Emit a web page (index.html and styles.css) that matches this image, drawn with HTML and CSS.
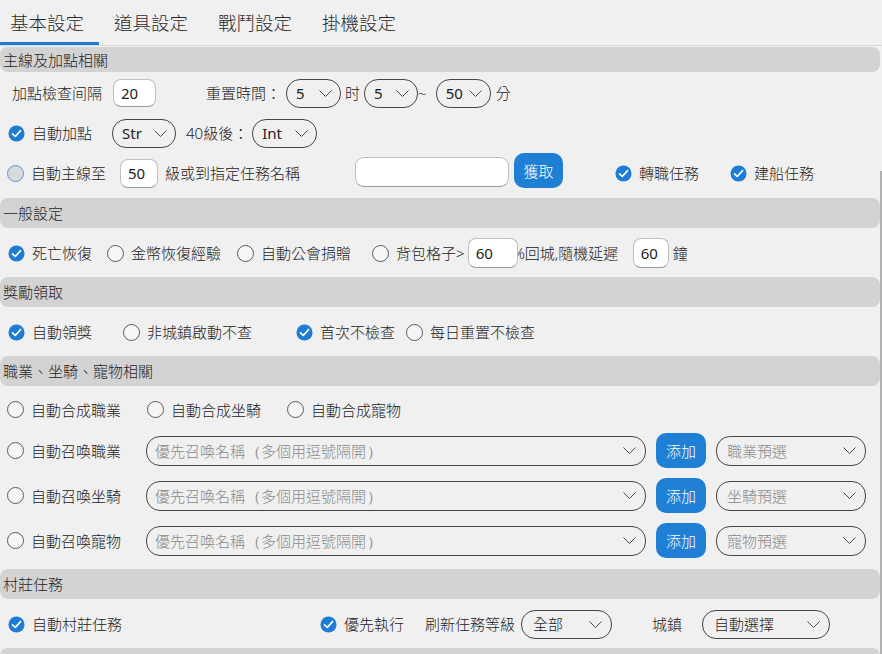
FILE: index.html
```html
<!DOCTYPE html>
<html lang="zh-Hant">
<head>
<meta charset="utf-8">
<title>基本設定</title>
<link rel="stylesheet" href="styles.css">
</head>
<body>
<nav class="tabs">
  <div class="tab active">基本設定</div>
  <div class="tab">道具設定</div>
  <div class="tab">戰鬥設定</div>
  <div class="tab">掛機設定</div>
</nav>

<main class="content">
  <section class="sec">
    <div class="head head-first">主線及加點相關</div>
    <div class="body body-first">
      <div class="row pl12">
        <span class="lbl">加點檢查间隔</span>
        <input class="inp h28 w43 ml11" value="20">
        <span class="lbl ml50">重置時間：</span>
        <div class="sel h28 w55 ml5"><span class="val">5</span><svg class="chev" viewBox="0 0 13 7"><path d="M0.5 0.5 6.5 6.5 12.5 0.5"/></svg></div>
        <span class="lbl ml4">时</span>
        <div class="sel h28 w54 ml4"><span class="val">5</span><svg class="chev" viewBox="0 0 13 7"><path d="M0.5 0.5 6.5 6.5 12.5 0.5"/></svg></div>
        <span class="lbl">~</span>
        <div class="sel h28 w55 ml9"><span class="val">50</span><svg class="chev" viewBox="0 0 13 7"><path d="M0.5 0.5 6.5 6.5 12.5 0.5"/></svg></div>
        <span class="lbl ml5">分</span>
      </div>
      <div class="row pl8">
        <label class="opt"><svg class="ico" viewBox="0 0 18 18"><circle cx="9" cy="9" r="8.5"/><path d="M4.8 9.3l2.9 2.9 5.6-6.2"/></svg><span>自動加點</span></label>
        <div class="sel w64 ml20"><span class="val">Str</span><svg class="chev" viewBox="0 0 13 7"><path d="M0.5 0.5 6.5 6.5 12.5 0.5"/></svg></div>
        <span class="lbl ml10">40級後：</span>
        <div class="sel w65 ml4"><span class="val">Int</span><svg class="chev" viewBox="0 0 13 7"><path d="M0.5 0.5 6.5 6.5 12.5 0.5"/></svg></div>
      </div>
      <div class="row pl7">
        <label class="opt"><span class="radio hover"></span><span>自動主線至</span></label>
        <input class="inp w38 ml14" value="50">
        <span class="lbl ml7">級或到指定任務名稱</span>
        <input class="inp inp-text w154 ml55 up2" value="">
        <button class="btn w49 ml5 up6">獲取</button>
        <label class="opt ml52"><svg class="ico" viewBox="0 0 18 18"><circle cx="9" cy="9" r="8.5"/><path d="M4.8 9.3l2.9 2.9 5.6-6.2"/></svg><span>轉職任務</span></label>
        <label class="opt ml31"><svg class="ico" viewBox="0 0 18 18"><circle cx="9" cy="9" r="8.5"/><path d="M4.8 9.3l2.9 2.9 5.6-6.2"/></svg><span>建船任務</span></label>
      </div>
    </div>
  </section>

  <section class="sec">
    <div class="head">一般設定</div>
    <div class="body">
      <div class="row pl8">
        <label class="opt"><svg class="ico" viewBox="0 0 18 18"><circle cx="9" cy="9" r="8.5"/><path d="M4.8 9.3l2.9 2.9 5.6-6.2"/></svg><span>死亡恢復</span></label>
        <label class="opt ml15"><span class="radio"></span><span>金幣恢復經驗</span></label>
        <label class="opt ml16"><span class="radio"></span><span>自動公會捐贈</span></label>
        <label class="opt ml21"><span class="radio"></span><span>背包格子&gt;</span></label>
        <input class="inp h30 w50 ml3 front" value="60">
        <span class="lbl lbl-pct">%回城,隨機延遲</span>
        <input class="inp h30 w36" value="60">
        <span class="lbl ml4">鐘</span>
      </div>
    </div>
  </section>

  <section class="sec">
    <div class="head">獎勵領取</div>
    <div class="body">
      <div class="row pl8">
        <label class="opt"><svg class="ico" viewBox="0 0 18 18"><circle cx="9" cy="9" r="8.5"/><path d="M4.8 9.3l2.9 2.9 5.6-6.2"/></svg><span>自動領獎</span></label>
        <label class="opt ml31"><span class="radio"></span><span>非城鎮啟動不查</span></label>
        <label class="opt ml44"><svg class="ico" viewBox="0 0 18 18"><circle cx="9" cy="9" r="8.5"/><path d="M4.8 9.3l2.9 2.9 5.6-6.2"/></svg><span>首次不檢查</span></label>
        <label class="opt ml11"><span class="radio"></span><span>每日重置不檢查</span></label>
      </div>
    </div>
  </section>

  <section class="sec">
    <div class="head">職業、坐騎、寵物相關</div>
    <div class="body body-pets">
      <div class="row row-short pl7">
        <label class="opt"><span class="radio"></span><span>自動合成職業</span></label>
        <label class="opt ml26"><span class="radio"></span><span>自動合成坐騎</span></label>
        <label class="opt ml26"><span class="radio"></span><span>自動合成寵物</span></label>
      </div>
      <div class="row row-tall pl7">
        <label class="opt"><span class="radio"></span><span>自動召喚職業</span></label>
        <div class="sel combo w500 ml25"><span class="ph">優先召喚名稱<span class="paren">（</span>多個用逗號隔開<span class="paren">）</span></span><svg class="chev" viewBox="0 0 13 7"><path d="M0.5 0.5 6.5 6.5 12.5 0.5"/></svg></div>
        <button class="btn w50 ml10">添加</button>
        <div class="sel preset w150 ml10"><span class="ph">職業預選</span><svg class="chev" viewBox="0 0 13 7"><path d="M0.5 0.5 6.5 6.5 12.5 0.5"/></svg></div>
      </div>
      <div class="row row-tall pl7">
        <label class="opt"><span class="radio"></span><span>自動召喚坐騎</span></label>
        <div class="sel combo w500 ml25"><span class="ph">優先召喚名稱<span class="paren">（</span>多個用逗號隔開<span class="paren">）</span></span><svg class="chev" viewBox="0 0 13 7"><path d="M0.5 0.5 6.5 6.5 12.5 0.5"/></svg></div>
        <button class="btn w50 ml10">添加</button>
        <div class="sel preset w150 ml10"><span class="ph">坐騎預選</span><svg class="chev" viewBox="0 0 13 7"><path d="M0.5 0.5 6.5 6.5 12.5 0.5"/></svg></div>
      </div>
      <div class="row row-tall pl7">
        <label class="opt"><span class="radio"></span><span>自動召喚寵物</span></label>
        <div class="sel combo w500 ml25"><span class="ph">優先召喚名稱<span class="paren">（</span>多個用逗號隔開<span class="paren">）</span></span><svg class="chev" viewBox="0 0 13 7"><path d="M0.5 0.5 6.5 6.5 12.5 0.5"/></svg></div>
        <button class="btn w50 ml10">添加</button>
        <div class="sel preset w150 ml10"><span class="ph">寵物預選</span><svg class="chev" viewBox="0 0 13 7"><path d="M0.5 0.5 6.5 6.5 12.5 0.5"/></svg></div>
      </div>
    </div>
  </section>

  <section class="sec">
    <div class="head">村莊任務</div>
    <div class="body">
      <div class="row pl8">
        <label class="opt"><svg class="ico" viewBox="0 0 18 18"><circle cx="9" cy="9" r="8.5"/><path d="M4.8 9.3l2.9 2.9 5.6-6.2"/></svg><span>自動村莊任務</span></label>
        <label class="opt ml198"><svg class="ico" viewBox="0 0 18 18"><circle cx="9" cy="9" r="8.5"/><path d="M4.8 9.3l2.9 2.9 5.6-6.2"/></svg><span>優先執行</span></label>
        <span class="lbl ml21">刷新任務等級</span>
        <div class="sel w91 ml6 pad-wide"><span>全部</span><svg class="chev" viewBox="0 0 13 7"><path d="M0.5 0.5 6.5 6.5 12.5 0.5"/></svg></div>
        <span class="lbl ml40">城鎮</span>
        <div class="sel w128 ml20 pad-wide"><span>自動選擇</span><svg class="chev" viewBox="0 0 13 7"><path d="M0.5 0.5 6.5 6.5 12.5 0.5"/></svg></div>
      </div>
    </div>
  </section>

  <section class="sec">
    <div class="head">&nbsp;</div>
  </section>
</main>

<div class="scroll-edge"></div>
</body>
</html>
```

FILE: styles.css
```css
* { box-sizing: border-box; }

html, body { margin: 0; padding: 0; }

body {
  width: 882px;
  height: 654px;
  overflow: hidden;
  position: relative;
  background: #f0f0f0;
  font-family: "Noto Sans", "Noto Sans CJK TC", sans-serif;
  font-size: 15px;
  font-weight: 300;
  line-height: 20px;
  color: #222;
}

/* ---------- tabs ---------- */
.tabs {
  display: flex;
  height: 46px;
  border-bottom: 1px solid #d8d8d8;
}

.tab {
  height: 45px;
  padding: 4px 15px 0;
  display: flex;
  align-items: center;
  font-size: 18.5px;
  color: #2a2a2a;
  border-bottom: 3px solid transparent;
}

.tab.active {
  padding-left: 10px;
  border-bottom-color: #1f7ad2;
}

/* ---------- sections ---------- */
.content { padding-top: 1px; }

.head {
  height: 30px;
  margin-right: 2px;
  padding-left: 3px;
  display: flex;
  align-items: center;
  background: #d3d3d3;
  border-radius: 8px;
  font-size: 15px;
  color: #1e1e1e;
}

.head-first { height: 25px; }

.body { padding: 5px 0 4px; }
.body-first { padding: 1px 0 5px; }
.body-pets { padding: 5px 0 6px; }

.row {
  display: flex;
  align-items: center;
  height: 40px;
  white-space: nowrap;
}

.row-short { height: 37px; }
.row-tall { height: 45px; }

.pl7 { padding-left: 7px; }
.pl8 { padding-left: 8px; }
.pl12 { padding-left: 12px; }

/* ---------- labels & options ---------- */
.lbl { flex: none; }

.lbl-pct {
  width: 120px;
  margin-left: -5px;
}

.opt {
  display: inline-flex;
  align-items: center;
  gap: 7px;
  flex: none;
}

.ico {
  width: 17px;
  height: 17px;
  flex: none;
}
.ico circle { fill: #1d7dd6; }
.ico path {
  fill: none;
  stroke: #fff;
  stroke-width: 1.8;
  stroke-linecap: round;
  stroke-linejoin: round;
}

.radio {
  width: 17px;
  height: 17px;
  flex: none;
  border: 1px solid #5a5a5a;
  border-radius: 50%;
  background: #f6f6f6;
}

.radio.hover {
  background: #dadada;
  border: 1.5px solid #5e92cc;
}

/* ---------- inputs ---------- */
.inp {
  flex: none;
  height: 29px;
  margin-top: 0;
  margin-bottom: 0;
  padding: 0 0 0 7px;
  border: 1px solid #bfbfbf;
  border-bottom-color: #9a9a9a;
  border-radius: 8px;
  background: #fff;
  font-family: inherit;
  font-size: 15px;
  font-weight: 400;
  color: #222;
  outline: none;
}

.inp-text { height: 30px; border-radius: 9px; }
.h28 { height: 28px; }
.h30 { height: 30px; }

.front { position: relative; z-index: 1; }

/* ---------- selects ---------- */
.sel {
  flex: none;
  height: 29px;
  display: flex;
  align-items: center;
  justify-content: space-between;
  padding: 0 8px 0 9px;
  border: 1px solid #454545;
  border-radius: 14px;
  color: #222;
}

.val { font-weight: 400; }

.combo { padding: 0 9px 0 8px; height: 30px; }
.preset { padding: 0 9px 0 10px; height: 30px; }
.pad-wide { padding: 0 9px 0 11px; }

.ph { color: #8a8a8a; }

.paren {
  display: inline-block;
  width: 16px;
  text-align: center;
  font-family: "Noto Sans", sans-serif;
}

.chev {
  width: 13px;
  height: 7px;
  flex: none;
}
.chev path {
  fill: none;
  stroke: #4a4a4a;
  stroke-width: 1;
}

/* ---------- buttons ---------- */
.btn {
  flex: none;
  height: 35px;
  padding: 0;
  border: none;
  border-radius: 10px;
  background: #1f7fd5;
  color: #fff;
  font-family: inherit;
  font-size: 15px;
  font-weight: 300;
}

.up2 { margin-bottom: 2px; }
.up6 { margin-bottom: 6px; }

/* ---------- widths / spacing ---------- */
.w36 { width: 36px; }
.w38 { width: 38px; }
.w43 { width: 43px; }
.w49 { width: 49px; }
.w50 { width: 50px; }
.w54 { width: 54px; }
.w55 { width: 55px; }
.w64 { width: 64px; }
.w65 { width: 65px; }
.w91 { width: 91px; }
.w128 { width: 128px; }
.w150 { width: 150px; }
.w154 { width: 154px; }
.w500 { width: 500px; }

.ml3 { margin-left: 3px; }
.ml4 { margin-left: 4px; }
.ml5 { margin-left: 5px; }
.ml6 { margin-left: 6px; }
.ml7 { margin-left: 7px; }
.ml9 { margin-left: 9px; }
.ml10 { margin-left: 10px; }
.ml11 { margin-left: 11px; }
.ml14 { margin-left: 14px; }
.ml15 { margin-left: 15px; }
.ml16 { margin-left: 16px; }
.ml20 { margin-left: 20px; }
.ml21 { margin-left: 21px; }
.ml25 { margin-left: 25px; }
.ml26 { margin-left: 26px; }
.ml31 { margin-left: 31px; }
.ml40 { margin-left: 40px; }
.ml44 { margin-left: 44px; }
.ml50 { margin-left: 50px; }
.ml52 { margin-left: 52px; }
.ml55 { margin-left: 55px; }
.ml198 { margin-left: 198px; }

/* thin scroll edge at the right of the panel */
.scroll-edge {
  position: absolute;
  right: 0;
  top: 171px;
  bottom: 0;
  width: 2px;
  background: #b0b0b0;
}
```
